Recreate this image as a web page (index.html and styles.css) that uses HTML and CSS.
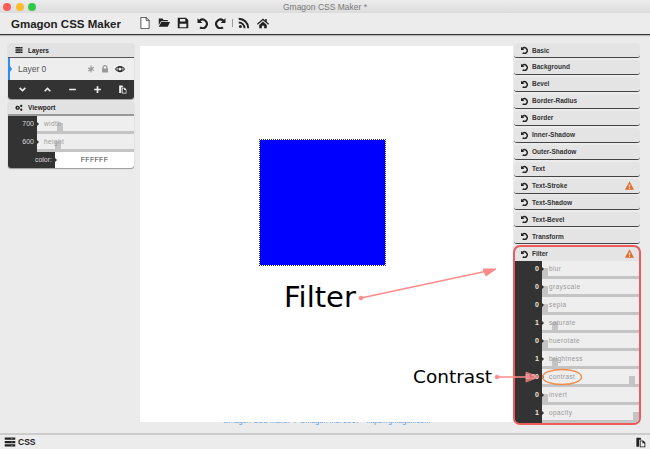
FILE: index.html
```html
<!DOCTYPE html>
<html lang="en">
<head>
    <meta charset="UTF-8">
    <title>Gmagon CSS Maker</title>
    <link rel="stylesheet" href="styles.css">
</head>
<body>
    <svg class="sprites" width="0" height="0">
        <symbol id="undo" viewBox="0 0 16 16"><path d="M2 1.500v6.500h6.500L6.200 5.700a4.300 4.300 0 1 1 .1 7l-1.800 2.400A7.200 7.200 0 1 0 4.100 3.600z"/></symbol>
        <symbol id="warn" viewBox="0 0 16 16"><path fill-rule="evenodd" d="M8 .5l8 15H0zM6.800 6v5h2.400V6zM6.800 12v2h2.400v-2z"/></symbol>
        <symbol id="clone" viewBox="0 0 16 16"><path d="M2 1h6l1 2v1H6v10H2z"/><path fill-rule="evenodd" d="M7 5h5l3 3v7H7zM8.200 6.200v7.600h5.600V9h-3V6.200z"/></symbol>
    </svg>

    <div class="titlebar">
        <span class="light red"></span>
        <span class="light yellow"></span>
        <span class="light green"></span>
        <span class="window-title">Gmagon CSS Maker *</span>
    </div>

    <div class="toolbar">
        <span class="brand">Gmagon CSS Maker</span>
        <div class="tools">
            <svg class="tool" viewBox="0 0 16 16"><path fill="#fff" stroke="#222" d="M2.500.5h7l4 4v11h-11z"/><path fill="none" stroke="#222" d="M9.500.5v4h4"/></svg>
            <svg class="tool" viewBox="0 0 16 16"><path d="M1 2h5l1.500 2H13v1.500H4L1 11zM4.500 6.500H16L13 13H1z"/></svg>
            <svg class="tool" viewBox="0 0 16 16"><path fill-rule="evenodd" d="M1 1h11l3 3v11H1zM4 2.500V6h7V2.500zM3.500 9v4.500h9V9z"/></svg>
            <svg class="tool" viewBox="0 0 16 16"><use href="#undo"/></svg>
            <svg class="tool flip" viewBox="0 0 16 16"><use href="#undo"/></svg>
            <span class="tool-sep"></span>
            <svg class="tool" viewBox="0 0 16 16"><circle cx="3.200" cy="12.800" r="2"/><path d="M1 6v2.600A6.400 6.400 0 0 1 7.400 15H10A9 9 0 0 0 1 6zM1 1v2.600A11.400 11.400 0 0 1 12.400 15H15A14 14 0 0 0 1 1z"/></svg>
            <svg class="tool" viewBox="0 0 16 16"><path d="M8 2L0 9l1 1.200L8 4.300l7 5.900L16 9l-3-2.600V2.500h-2v2.200zM3 10.500L8 6l5 4.500V15H9.500v-3.500h-3V15H3z"/></svg>
        </div>
    </div>

    <div class="main">
        <div class="side left">
            <div class="panel">
                <div class="panel-head">
                    <svg class="head-icon" viewBox="0 0 16 16"><path d="M1 2h14v3H1zM1 6.500h14v3H1zM1 11h14v3H1z"/><path fill="#e2e2e2" d="M10 3h1v1h-1zM10 7.500h1v1h-1zM10 12h1v1h-1z"/></svg>
                    Layers
                </div>
                <div class="layer-row">
                    <span class="layer-name">Layer 0</span>
                    <svg class="layer-icon grey" viewBox="0 0 16 16"><path d="M6.800 1h2.400v4.700l4-2.300 1.200 2.100-4 2.300 4 2.300-1.200 2.100-4-2.300V15H6.800v-4.100l-4 2.300-1.200-2.100 4-2.300-4-2.300 1.200-2.100 4 2.300z"/></svg>
                    <svg class="layer-icon grey" viewBox="0 0 16 16"><path fill-rule="evenodd" d="M3 7V5a5 5 0 0 1 10 0v2h1v8H2V7zM5.500 7h5V5a2.500 2.500 0 0 0-5 0z"/></svg>
                    <svg class="layer-icon eye" viewBox="0 0 16 16"><path fill-rule="evenodd" d="M0 8c2-3.400 4.800-5 8-5s6 1.600 8 5c-2 3.400-4.800 5-8 5s-6-1.600-8-5zM8 5.500a2.500 2.500 0 1 0 0 5 2.500 2.500 0 0 0 0-5zM1.800 8c1 1.300 2 2.300 3.200 3a5 5 0 0 1 0-6c-1.200.7-2.200 1.700-3.200 3zM11 5a5 5 0 0 1 0 6c1.200-.7 2.200-1.700 3.200-3-1-1.300-2-2.300-3.200-3z"/></svg>
                </div>
                <div class="layer-actions">
                    <svg viewBox="0 0 16 16"><path d="M2 6l2-2 4 4 4-4 2 2-6 6z"/></svg>
                    <svg viewBox="0 0 16 16"><path d="M2 10l2 2 4-4 4 4 2-2-6-6z"/></svg>
                    <svg viewBox="0 0 16 16"><path d="M2 6.500h12v3H2z"/></svg>
                    <svg viewBox="0 0 16 16"><path d="M6.500 2h3v4.500H14v3H9.500V14h-3V9.500H2v-3h4.500z"/></svg>
                    <svg viewBox="0 0 16 16"><use href="#clone"/></svg>
                </div>
            </div>

            <div class="panel">
                <div class="panel-head thick">
                    <svg class="head-icon" viewBox="0 0 16 16"><path fill-rule="evenodd" d="M5.500 3l1 1.200 1.500-.2.800 1.500 1 1-.3 1.300.3 1.400-1.200.8-.8 1.400-1.500-.2-1 1-1-1-1.500.2-.8-1.400L.8 8.700 1 7.500.8 6l1.200-1 .8-1.300 1.500.2zM5.500 6a1.500 1.500 0 1 0 0 3 1.500 1.500 0 0 0 0-3z"/><circle cx="12.500" cy="4" r="2.300"/><circle cx="12.500" cy="11.500" r="2.300"/></svg>
                    Viewport
                </div>
                <div class="row vp">
                    <span class="val">700</span>
                    <div class="slider"><span class="slider-name">width</span><span class="thumb" style="left: 21%"></span></div>
                </div>
                <div class="row vp">
                    <span class="val">600</span>
                    <div class="slider"><span class="slider-name">height</span><span class="thumb" style="left: 19%"></span></div>
                </div>
                <div class="row color-row">
                    <span class="val">color:</span>
                    <div class="color-val">FFFFFF</div>
                </div>
            </div>
        </div>

        <div class="canvas-col">
            <div class="canvas">
                <div class="box"></div>
                <span class="note note-filter">Filter</span>
                <span class="note note-contrast">Contrast</span>
            </div>
            <div class="copyright">Gmagon CSS Maker © Gmagon Inc. 2017 • https://gmagon.com</div>
        </div>

        <div class="side right">
            <div class="section"><svg class="undo"><use href="#undo"/></svg>Basic</div>
            <div class="section"><svg class="undo"><use href="#undo"/></svg>Background</div>
            <div class="section"><svg class="undo"><use href="#undo"/></svg>Bevel</div>
            <div class="section"><svg class="undo"><use href="#undo"/></svg>Border-Radius</div>
            <div class="section"><svg class="undo"><use href="#undo"/></svg>Border</div>
            <div class="section"><svg class="undo"><use href="#undo"/></svg>Inner-Shadow</div>
            <div class="section"><svg class="undo"><use href="#undo"/></svg>Outer-Shadow</div>
            <div class="section"><svg class="undo"><use href="#undo"/></svg>Text</div>
            <div class="section"><svg class="undo"><use href="#undo"/></svg>Text-Stroke<svg class="warn"><use href="#warn"/></svg></div>
            <div class="section"><svg class="undo"><use href="#undo"/></svg>Text-Shadow</div>
            <div class="section"><svg class="undo"><use href="#undo"/></svg>Text-Bevel</div>
            <div class="section"><svg class="undo"><use href="#undo"/></svg>Transform</div>

            <div class="filter">
                <div class="section open"><svg class="undo"><use href="#undo"/></svg>Filter<svg class="warn"><use href="#warn"/></svg></div>
                <div class="row fl"><span class="val">0</span><div class="slider"><span class="slider-name">blur</span><span class="thumb" style="left: 0"></span></div></div>
                <div class="row fl"><span class="val">0</span><div class="slider"><span class="slider-name">grayscale</span><span class="thumb" style="left: 0"></span></div></div>
                <div class="row fl"><span class="val">0</span><div class="slider"><span class="slider-name">sepia</span><span class="thumb" style="left: 0"></span></div></div>
                <div class="row fl"><span class="val">1</span><div class="slider"><span class="slider-name">saturate</span><span class="thumb" style="left: 10%"></span></div></div>
                <div class="row fl"><span class="val">0</span><div class="slider"><span class="slider-name">huerotate</span><span class="thumb" style="left: 0"></span></div></div>
                <div class="row fl"><span class="val">1</span><div class="slider"><span class="slider-name">brightness</span><span class="thumb" style="left: 10%"></span></div></div>
                <div class="row fl"><span class="val">8.50</span><div class="slider"><span class="slider-name">contrast</span><span class="thumb" style="left: 90%"></span></div></div>
                <div class="row fl"><span class="val">0</span><div class="slider"><span class="slider-name">invert</span><span class="thumb" style="left: 0"></span></div></div>
                <div class="row fl"><span class="val">1</span><div class="slider"><span class="slider-name">opacity</span><span class="thumb" style="left: 94%"></span></div></div>
            </div>
        </div>
    </div>

    <div class="footer">
        <svg class="head-icon big" viewBox="0 0 16 16"><path d="M1 2h14v3H1zM1 6.500h14v3H1zM1 11h14v3H1z"/><path fill="#e8e8e8" d="M10 3h1v1h-1zM10 7.500h1v1h-1zM10 12h1v1h-1z"/></svg>
        <span class="footer-label">CSS</span>
        <svg class="footer-clone" viewBox="0 0 16 16"><use href="#clone"/></svg>
    </div>

    <!-- annotation arrows, drawn over the app -->
    <svg class="arrows" width="650" height="449" viewBox="0 0 650 449">
        <g fill="#ff8a8a" stroke="#ff8a8a">
            <circle cx="361" cy="298" r="1.800"/>
            <path d="M361 298L492 270" stroke-width="1.300"/>
            <path d="M483 269L496 269 486 276z" stroke-width="1"/>
            <circle cx="497" cy="377" r="1.800"/>
            <path d="M497 377H530" stroke-width="1.300"/>
            <path d="M526 372L539 377 526 382z" stroke-width="1" opacity=".75"/>
        </g>
        <ellipse cx="562" cy="377" rx="19.500" ry="7.500" fill="none" stroke="#f08a4a" stroke-width="1.300"/>
    </svg>
</body>
</html>
```

FILE: styles.css
```css
* {
    box-sizing: border-box;
}
body {
    margin: 0;
    width: 650px;
    height: 449px;
    overflow: hidden;
    position: relative;
    display: flex;
    flex-direction: column;
    background: #ebebeb;
    color: #222;
    font-family: "Liberation Sans", Arial, sans-serif;
}
.sprites {
    position: absolute;
}
.titlebar {
    height: 13px;
    flex: none;
    display: flex;
    align-items: center;
    gap: 4.500px;
    padding-left: 3px;
    position: relative;
    background: linear-gradient(#ececec, #dcdcdc);
}
.light {
    width: 8px;
    height: 8px;
    border-radius: 50%;
}
.red { background: #fc5b57; }
.yellow { background: #fdbb2e; }
.green { background: #34c84a; }
.window-title {
    position: absolute;
    left: 0;
    right: 0;
    text-align: center;
    font-size: 8.500px;
    color: #777;
}
.toolbar {
    height: 22px;
    flex: none;
    display: flex;
    align-items: center;
    padding-left: 11px;
    background: #ececec;
    border-bottom: 1px solid #333;
    box-shadow: 0 1px 1px #bbb;
}
.brand {
    font-size: 11.500px;
    font-weight: bold;
    width: 128px;
    flex: none;
    white-space: nowrap;
}
.tools {
    display: flex;
    align-items: center;
    gap: 7px;
    margin-top: -2px;
}
.tool {
    width: 12px;
    height: 12px;
    fill: #222;
}
.flip {
    transform: scaleX(-1);
}
.tool-sep {
    width: 1px;
    height: 8px;
    background: #999;
    margin: 0 -2px;
}
.main {
    flex: 1;
    min-height: 0;
    display: flex;
}
.side {
    width: 126px;
    flex: none;
    padding-top: 8px;
    display: flex;
    flex-direction: column;
}
.left {
    margin: 0 6px 0 8px;
    gap: 2px;
}
.right {
    margin: 0 10px 0 1px;
    gap: 1.950px;
}
.panel {
    border-radius: 3px;
    overflow: hidden;
    box-shadow: 0 1px 1px #999;
}
.panel-head {
    height: 15px;
    display: flex;
    align-items: center;
    gap: 5px;
    padding-left: 7px;
    font-size: 6.500px;
    font-weight: bold;
    background: #e2e2e2;
    border-bottom: 1px solid #555;
}
.thick {
    border-bottom: 2px solid #999;
}
.head-icon {
    width: 8px;
    height: 8px;
    fill: #222;
}
.layer-row {
    height: 22px;
    display: flex;
    align-items: center;
    gap: 6px;
    padding: 0 9px 0 8px;
    background: #eeeeee;
    border-left: 2px solid #2f8cf0;
    position: relative;
}
.layer-row::before {
    content: "";
    position: absolute;
    left: 0;
    top: 8px;
    border-left: 2px solid #2f8cf0;
    border-top: 3px solid transparent;
    border-bottom: 3px solid transparent;
}
.layer-name {
    font-size: 8.500px;
    color: #555;
    flex: 1;
}
.layer-icon {
    width: 8px;
    height: 8px;
    fill: #222;
}
.eye {
    width: 10px;
    height: 10px;
}
.grey {
    fill: #999;
}
.layer-actions {
    height: 19px;
    display: flex;
    align-items: center;
    justify-content: space-between;
    padding: 0 7px 0 10px;
    background: #333;
}
.layer-actions svg {
    width: 9px;
    height: 9px;
    fill: #eee;
}
.row {
    display: flex;
    background: #333;
}
.val {
    width: 29px;
    flex: none;
    padding-right: 3px;
    text-align: right;
    font-size: 7px;
    line-height: 16px;
    color: #ddd;
    position: relative;
}
.val::after {
    content: "";
    position: absolute;
    right: -2px;
    top: 6px;
    border-left: 2px solid #333;
    border-top: 2px solid transparent;
    border-bottom: 2px solid transparent;
    z-index: 1;
}
.slider {
    flex: 1;
    position: relative;
    background: #eeeeee;
    border-bottom: 3px solid #c4c4c4;
}
.vp {
    height: 18px;
}
.slider-name {
    position: absolute;
    left: 7px;
    top: 2px;
    font-size: 6.500px;
    line-height: 12px;
    letter-spacing: .4px;
    color: #999;
    z-index: 1;
}
.thumb {
    position: absolute;
    top: 7px;
    bottom: -3px;
    width: 6px;
    background: #c4c4c4;
}
.color-row {
    height: 16px;
}
.color-row .val {
    width: 47px;
}
.color-val {
    flex: 1;
    background: #fff;
    text-align: center;
    font-size: 7px;
    line-height: 16px;
    letter-spacing: .3px;
    color: #444;
}
.canvas-col {
    flex: 1;
    min-width: 0;
    padding-top: 11px;
    position: relative;
}
.canvas {
    height: 376px;
    background: #fff;
    position: relative;
    z-index: 1;
}
.box {
    position: absolute;
    left: 119px;
    top: 93px;
    width: 127px;
    height: 127px;
    background: #0000ff;
    background-clip: padding-box;
    border: 1px dotted #333;
}
.note {
    position: absolute;
    font-family: "DejaVu Sans", sans-serif;
    color: #000;
    white-space: nowrap;
}
.note-filter {
    left: 144px;
    top: 234px;
    font-size: 29px;
}
.note-contrast {
    left: 273px;
    top: 320px;
    font-size: 18.500px;
}
.copyright {
    position: absolute;
    top: 381px;
    left: 0;
    right: 0;
    text-align: center;
    font-size: 7.300px;
    color: #5b9bd5;
    white-space: nowrap;
}
.section {
    height: 15px;
    flex: none;
    display: flex;
    align-items: center;
    padding: 0 6px;
    font-size: 6.500px;
    font-weight: bold;
    color: #333;
    background: #e4e4e4;
    border-radius: 3px;
    border-bottom: 1px solid #444;
}
.undo {
    width: 8px;
    height: 8px;
    margin-right: 4px;
    fill: #222;
}
.warn {
    width: 9px;
    height: 9px;
    margin-left: auto;
    fill: #e8682a;
}
.filter {
    width: 128px;
    margin: -1.400px -1px 0;
    height: 180px;
    border: 2px solid #f05a5a;
    border-radius: 7px;
    overflow: hidden;
    background: #333;
}
.section.open {
    border-radius: 0;
    border-bottom: 0;
    height: 14px;
    padding: 0 5px;
}
.fl {
    height: 18px;
}
.fl .val {
    width: 27px;
    color: #f2e8d8;
    font-weight: bold;
}
.footer {
    height: 16px;
    flex: none;
    display: flex;
    align-items: center;
    gap: 2px;
    padding: 0 4px;
    background: #ececec;
    border-top: 2px solid #ccc;
}
.big {
    width: 12px;
    height: 12px;
}
.footer-label {
    font-size: 8.500px;
    font-weight: bold;
}
.footer-clone {
    width: 11px;
    height: 11px;
    margin-left: auto;
    fill: #222;
}
.arrows {
    position: absolute;
    left: 0;
    top: 0;
    z-index: 2;
    pointer-events: none;
}
```
